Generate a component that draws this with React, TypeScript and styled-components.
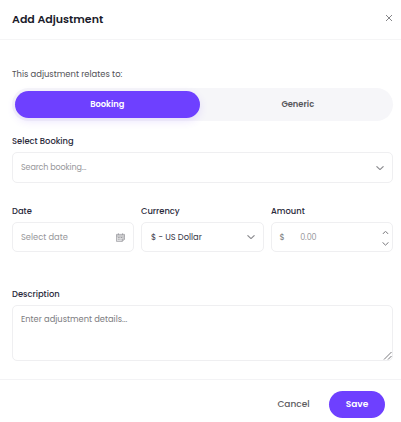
import { useState } from 'react'
import styled, { createGlobalStyle } from 'styled-components'

const GlobalStyle = createGlobalStyle`
  * {
    box-sizing: border-box;
  }

  body {
    margin: 0;
    background-color: #fff;
    font-family: Poppins, Inter, sans-serif;
    font-size: 8.3px;
    color: #1f1f2e;
  }

  button {
    font-family: inherit;
    border: none;
    padding: 0;
    cursor: pointer;
  }
`

const Modal = styled.div`
  width: 401px;
  height: 422px;
  display: flex;
  flex-direction: column;
  background-color: #fff;
  overflow: hidden;
  white-space: nowrap;
`

const Header = styled.div`
  height: 40px;
  flex-shrink: 0;
  display: flex;
  justify-content: space-between;
  align-items: center;
  padding: 0 8px 1px 12px;
  border-bottom: 1px solid #f5f5f6;
`

const Title = styled.h2`
  margin: 0;
  font-size: 11px;
  line-height: 16px;
  font-weight: 600;
  color: #1b1c2b;
`

const CloseButton = styled.button`
  display: flex;
  margin-bottom: 2px;
  background: none;
  color: #77777b;
`

const Body = styled.div`
  height: 339px;
  flex-shrink: 0;
  padding: 27px 8px 0 12px;
`

const Prompt = styled.div`
  height: 14px;
  line-height: 14px;
  font-size: 8.4px;
  color: #515156;
`

const Toggle = styled.div`
  height: 33px;
  margin-top: 7px;
  padding: 2.5px 2.5px 3.5px;
  display: flex;
  border-radius: 17px;
  background-color: #f6f6f9;
`

const ToggleOption = styled.button<{ $active: boolean }>`
  flex: ${({ $active }) => ($active ? '0 0 185.5px' : '1')};
  padding-left: ${({ $active }) => ($active ? 0 : 5)}px;
  border-radius: 14px;
  font-size: 8.3px;
  font-weight: 600;
  background-color: ${({ $active }) => ($active ? '#6e40ff' : 'transparent')};
  color: ${({ $active }) => ($active ? '#fff' : '#56565b')};
  box-shadow: ${({ $active }) => ($active ? '0 3px 9px rgba(110, 64, 255, 0.14)' : 'none')};
`

const Field = styled.div<{ $top?: number }>`
  margin-top: ${({ $top }) => $top || 0}px;
`

const Label = styled.div`
  height: 14px;
  line-height: 14px;
  margin-bottom: 4px;
  font-size: 8.35px;
  font-weight: 500;
  color: #29293a;
`

const Control = styled.div<{ $height?: number }>`
  height: ${({ $height }) => $height || 30}px;
  display: flex;
  align-items: center;
  justify-content: space-between;
  padding: 0 8px;
  border: 1px solid #efeff1;
  border-radius: 5px;
  background-color: #fff;
  color: #8a8a8e;
`

const Placeholder = styled.span<{ $size?: number; $spacing?: number; $dark?: boolean }>`
  font-size: ${({ $size }) => $size || 8.3}px;
  letter-spacing: ${({ $spacing }) => $spacing || 0}px;
  color: ${({ $dark }) => ($dark ? '#7c7c80' : '#97979b')};
`

const Value = styled.span`
  margin-left: 1px;
  color: #353544;
`

const FieldRow = styled.div`
  display: grid;
  grid-template-columns: 122px 123px 122px;
  gap: 7px;
  margin-top: 21px;
`

const AmountInput = styled.div`
  display: flex;
  align-items: baseline;
  gap: 15.5px;
  margin-left: -0.5px;
`

const Currency = styled.span`
  color: #77777b;
`

const Stepper = styled.div`
  display: flex;
  flex-direction: column;
  gap: 8px;
  margin: 2px -5px 0 0;
  color: #737377;
`

const TextArea = styled.div`
  position: relative;
  height: 56px;
  padding: 6px 8px;
  line-height: 14px;
  border: 1px solid #efeff1;
  border-radius: 5px;
  color: #6c6c70;
`

const ResizeHandle = styled.svg`
  position: absolute;
  right: 0;
  bottom: 0;
`

const Footer = styled.div`
  flex: 1;
  display: flex;
  justify-content: flex-end;
  align-items: flex-start;
  gap: 19px;
  padding: 10.5px 16px 0 0;
  border-top: 1px solid #f3f3f5;
`

const FooterButton = styled.button<{ $primary?: boolean }>`
  height: 27.5px;
  width: ${({ $primary }) => ($primary ? '56px' : '33px')};
  border-radius: 14px;
  font-size: 9px;
  font-weight: ${({ $primary }) => ($primary ? 600 : 500)};
  background-color: ${({ $primary }) => ($primary ? '#6e40ff' : 'transparent')};
  color: ${({ $primary }) => ($primary ? '#fff' : '#5c5c60')};
`

const Chevron = ({ up = false, width = 8 }: { up?: boolean; width?: number }) => (
  <svg width={width} height={width / 2} viewBox="0 0 8 4" fill="none" stroke="currentColor" strokeWidth="1.1">
    <path d={up ? 'M.5 3.7 4 .4l3.5 3.3' : 'M.5.3 4 3.6l3.5-3.3'} />
  </svg>
)

const CalendarIcon = () => (
  <svg width="9" height="9" viewBox="0 0 9 9" fill="none" stroke="currentColor" strokeWidth=".6">
    <path d="M.5 1.4h8v4.8L6.3 8.4H.5z" fill="#e4e4e6" />
    <path d="M.5 3h8M2.4.2v1.8M6.6.2v1.8M8.5 6H6.3v2.4" />
    <path d="M1.8 4.5h5.6M1.8 6.2h3.5" strokeWidth=".8" strokeDasharray="1 .6" />
  </svg>
)

const App = () => {
  const [type, setType] = useState('Booking')

  return (
    <>
      <GlobalStyle />
      <Modal>
        <Header>
          <Title>Add Adjustment</Title>
          <CloseButton aria-label="Close">
            <svg width="8" height="8" viewBox="0 0 8 8" stroke="currentColor" strokeWidth=".9">
              <path d="m1 1 6 6M7 1 1 7" />
            </svg>
          </CloseButton>
        </Header>
        <Body>
          <Prompt>This adjustment relates to:</Prompt>
          <Toggle>
            {['Booking', 'Generic'].map((option) => (
              <ToggleOption key={option} $active={type === option} onClick={() => setType(option)}>
                {option}
              </ToggleOption>
            ))}
          </Toggle>
          <Field $top={13}>
            <Label>Select Booking</Label>
            <Control $height={31}>
              <Placeholder $size={8} $spacing={-0.12}>Search booking...</Placeholder>
              <Chevron />
            </Control>
          </Field>
          <FieldRow>
            <Field>
              <Label>Date</Label>
              <Control>
                <Placeholder>Select date</Placeholder>
                <CalendarIcon />
              </Control>
            </Field>
            <Field>
              <Label>Currency</Label>
              <Control>
                <Value>$ - US Dollar</Value>
                <Chevron />
              </Control>
            </Field>
            <Field>
              <Label>Amount</Label>
              <Control>
                <AmountInput>
                  <Currency>$</Currency>
                  <Placeholder $size={8} $spacing={-0.1}>0.00</Placeholder>
                </AmountInput>
                <Stepper>
                  <Chevron up width={7} />
                  <Chevron width={7} />
                </Stepper>
              </Control>
            </Field>
          </FieldRow>
          <Field $top={35}>
            <Label>Description</Label>
            <TextArea>
              <Placeholder $dark>Enter adjustment details...</Placeholder>
              <ResizeHandle width="9" height="9" viewBox="0 0 9 9" stroke="currentColor" strokeWidth=".9">
                <path d="M1 8.5 8.5 1M5 8.5 8.5 5" />
              </ResizeHandle>
            </TextArea>
          </Field>
        </Body>
        <Footer>
          <FooterButton>Cancel</FooterButton>
          <FooterButton $primary>Save</FooterButton>
        </Footer>
      </Modal>
    </>
  )
}

export default App
